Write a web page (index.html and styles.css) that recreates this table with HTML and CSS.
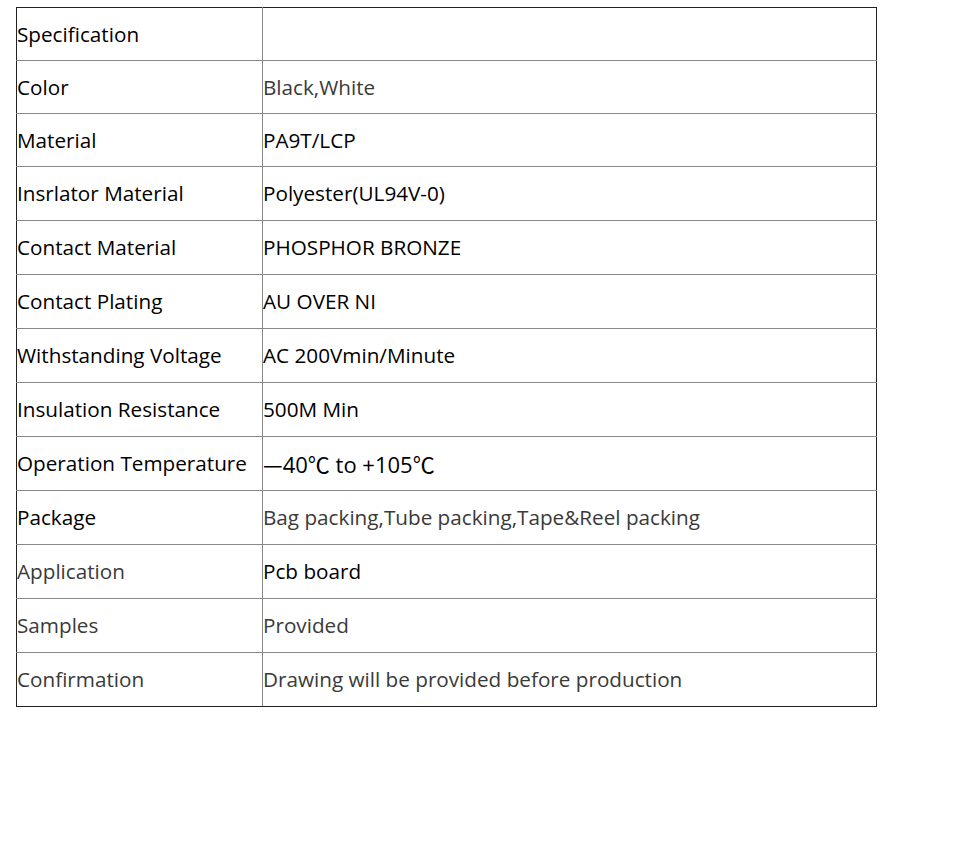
FILE: index.html
```html
<!DOCTYPE html>
<html lang="en">
<head>
<meta charset="utf-8">
<title>Specification</title>
<link rel="stylesheet" href="styles.css">
</head>
<body>
<table class="spec">
  <colgroup><col class="c-key"><col class="c-val"></colgroup>
  <tbody>
    <tr class="r53"><td>Specification</td><td></td></tr>
    <tr class="r53"><td>Color</td><td class="muted">Black,White</td></tr>
    <tr class="r53"><td>Material</td><td>PA9T/LCP</td></tr>
    <tr><td>Insrlator Material</td><td>Polyester(UL94V-0)</td></tr>
    <tr><td>Contact Material</td><td>PHOSPHOR BRONZE</td></tr>
    <tr><td>Contact Plating</td><td>AU OVER NI</td></tr>
    <tr><td>Withstanding Voltage</td><td>AC 200Vmin/Minute</td></tr>
    <tr><td>Insulation Resistance</td><td>500M Min</td></tr>
    <tr><td>Operation Temperature</td><td class="temp"><span class="cjk">—</span>40<span class="cjk">℃</span> to +105<span class="cjk">℃</span></td></tr>
    <tr><td>Package</td><td class="muted">Bag packing,Tube packing,Tape&amp;Reel packing</td></tr>
    <tr><td class="muted">Application</td><td>Pcb board</td></tr>
    <tr><td class="muted">Samples</td><td class="muted">Provided</td></tr>
    <tr><td class="muted">Confirmation</td><td class="muted">Drawing will be provided before production</td></tr>
  </tbody>
</table>
</body>
</html>
```
FILE: styles.css
```css
html, body {
  margin: 0;
  padding: 0;
  background: #fff;
}
body {
  padding: 7px 0 0 16px;
  font-family: "Open Sans", "Liberation Sans", sans-serif;
  font-size: 20.7px;
  color: #000;
}
.spec {
  border-collapse: collapse;
  width: 861px;
  table-layout: fixed;
  border: 1px solid #222;
}
.c-key { width: 246px; }
.spec td {
  border: 1px solid #888;
  padding: 0;
  height: 53px;
  vertical-align: middle;
  white-space: nowrap;
  line-height: 1.2;
}
.spec tr.r53 td { height: 52px; }
.spec tr:first-child td { border-top-color: #222; }
.spec tr:last-child td { border-bottom-color: #222; }
.spec td:first-child { border-left-color: #222; }
.spec td:last-child { border-right-color: #222; }
.muted { color: #3a3a3a; }
.temp { font-size: 22px; }
.cjk { font-family: "Noto Sans CJK SC", sans-serif; }
```
